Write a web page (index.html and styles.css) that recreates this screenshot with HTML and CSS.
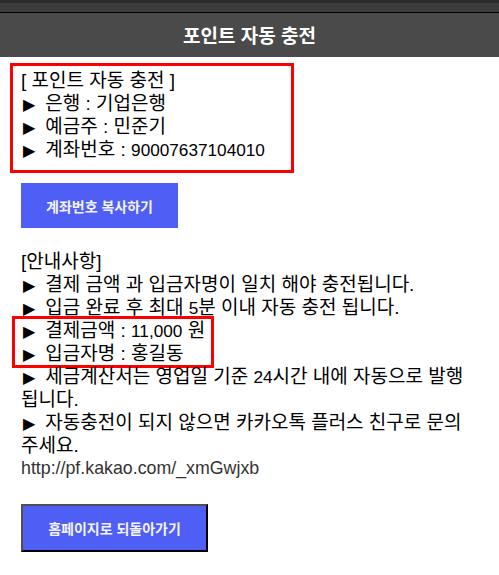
FILE: index.html
```html
<!DOCTYPE html>
<html lang="ko">
<head>
<meta charset="utf-8">
<title>포인트 자동 충전</title>
<link rel="stylesheet" href="styles.css">
</head>
<body>
<div class="topbar">
  <div class="topbar-dark"></div>
  <div class="topbar-mid"></div>
  <div class="topbar-line"></div>
</div>
<header class="header">포인트 자동 충전</header>
<main class="content">
  <div class="account-box">
    <div class="line">[ 포인트 자동 충전 ]</div>
    <div class="line"><span class="arrow">▶</span>은행 : 기업은행</div>
    <div class="line"><span class="arrow">▶</span>예금주 : 민준기</div>
    <div class="line"><span class="arrow">▶</span>계좌번호 : <span class="num">90007637104010</span></div>
  </div>
  <button class="btn btn-copy" type="button">계좌번호 복사하기</button>
  <div class="notice">
    <div class="line">[안내사항]</div>
    <div class="line"><span class="arrow">▶</span>결제 금액 과 입금자명이 일치 해야 충전됩니다.</div>
    <div class="line"><span class="arrow">▶</span>입금 완료 후 최대 <span class="num">5</span>분 이내 자동 충전 됩니다.</div>
    <div class="highlight">
      <div class="line"><span class="arrow">▶</span>결제금액 : <span class="num">11,000</span> 원</div>
      <div class="line"><span class="arrow">▶</span>입금자명 : 홍길동</div>
    </div>
    <div class="line"><span class="arrow">▶</span>세금계산서는 영업일 기준 <span class="num">24</span>시간 내에 자동으로 발행됩니다.</div>
    <div class="line"><span class="arrow">▶</span>자동충전이 되지 않으면 카카오톡 플러스 친구로 문의 주세요.</div>
    <div class="line link">http://pf.kakao.com/_xmGwjxb</div>
  </div>
  <button class="btn btn-home" type="button">홈페이지로 되돌아가기</button>
</main>
</body>
</html>
```

FILE: styles.css
```css
html, body {
  margin: 0;
  padding: 0;
  background: #ffffff;
}
body {
  font-family: "Liberation Sans", "Noto Sans CJK KR", sans-serif;
  color: #000;
  width: 499px;
}
.topbar-dark {
  height: 3px;
  background: #2b2b2b;
}
.topbar-mid {
  height: 9px;
  background: #3c3c3c;
}
.topbar-line {
  height: 1px;
  background: #000;
}
.header {
  height: 44px;
  background: #4a4a4a;
  color: #fff;
  font-family: "Noto Sans CJK KR", sans-serif;
  font-size: 19px;
  font-weight: 700;
  display: flex;
  align-items: center;
  justify-content: center;
  padding-bottom: 2px;
  box-sizing: border-box;
}
.content {
  padding: 0 21px;
}
.line {
  font-size: 19px;
  line-height: 23px;
}
.num {
  font-size: 17.2px;
  line-height: 1;
}
.arrow {
  font-family: "DejaVu Sans", sans-serif;
  font-size: 16px;
  line-height: 1;
  margin-left: 2px;
  margin-right: 10px;
}
.account-box {
  margin: 6px 0 0 -11px;
  width: 284px;
  box-sizing: border-box;
  border: 3px solid #ff0000;
  padding: 3px 8px 9px 8px;
  white-space: nowrap;
}
.btn {
  display: block;
  background: #4f5ff5;
  color: #f4f4ff;
  font-family: "Noto Sans CJK KR", sans-serif;
  font-size: 14px;
  font-weight: 700;
  padding: 0;
  cursor: pointer;
}
.btn-copy {
  margin-top: 10px;
  width: 157px;
  height: 45px;
  border: none;
}
.notice {
  margin-top: 22px;
  width: 449px;
}
.highlight {
  margin: -3px 0 -3px -9px;
  width: 202px;
  box-sizing: border-box;
  border: 3px solid #ff0000;
  padding: 0 6px;
  white-space: nowrap;
}
.link {
  color: #333;
  font-size: 17.8px;
}
.btn-home {
  margin-top: 24px;
  width: 187px;
  height: 48px;
  border: 2px solid;
  border-color: #505050 #000 #000 #505050;
  box-sizing: border-box;
}
```
